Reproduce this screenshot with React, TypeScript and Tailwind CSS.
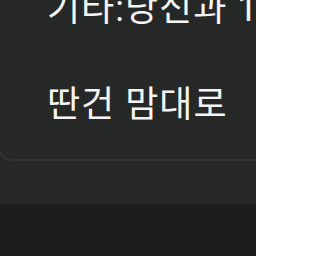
export default function App() {
  return (
    <div
      className="h-[256px] w-[256px] overflow-hidden bg-[#1c1d1d]"
      style={{ fontFamily: 'Roboto, "Noto Sans CJK KR", sans-serif' }}
    >
      <div className="h-[204px] overflow-hidden bg-[#262727]">
        <div className="-mt-[13px] -ml-[2px] -mr-[20px] rounded-b-[14px] border-b-2 border-l-2 border-[#313232] pb-[32px] pl-[47px]">
          <p className="text-[36px] leading-[44px] tracking-[1px] whitespace-nowrap text-[#f5f5f5]">기타:당신과 1</p>
          <p className="mt-[52px] text-[36px] leading-[44px] tracking-[1px] whitespace-nowrap text-[#f5f5f5]">딴건 맘대로</p>
        </div>
      </div>
    </div>
  );
}
